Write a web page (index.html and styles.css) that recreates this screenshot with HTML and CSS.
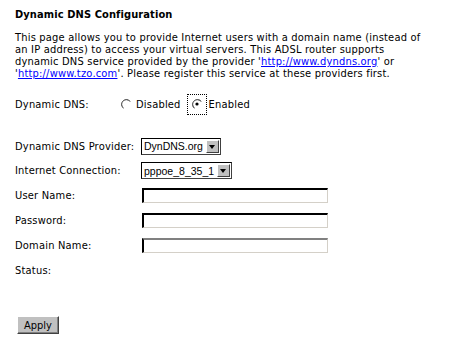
FILE: index.html
```html
<!DOCTYPE html>
<html>
<head>
    <title>Dynamic DNS Configuration</title>
    <link rel="stylesheet" href="styles.css">
</head>
<body>
    <div class="page">
        <h1 class="title">Dynamic DNS Configuration</h1>
        <p class="intro">This page allows you to provide Internet users with a domain name (instead of<br>
        an IP address) to access your virtual servers. This ADSL router supports<br>
        dynamic DNS service provided by the provider '<a href="#">http://www.dyndns.org</a>' or<br>
        '<a href="#">http://www.tzo.com</a>'. Please register this service at these providers first.</p>

        <div class="radio-row">
            <span class="label">Dynamic DNS:</span>
            <span class="radio">
                <svg width="12" height="12" viewBox="0 0 12 12">
                    <path d="M10.5 3.5 A5 5 0 1 0 3.5 10.5" fill="none" stroke="#808080"/>
                    <path d="M1.5 8.5 A5 5 0 0 0 8.5 1.5" fill="none" stroke="#fff"/>
                    <path d="M9.8 3.2 A4 4 0 1 0 3.2 9.8" fill="none" stroke="#404040"/>
                    <circle cx="6" cy="6" r="3.6" fill="#fff"/>
                </svg>
            </span>
            <span class="radio-text">Disabled</span>
            <span class="radio focus">
                <svg width="12" height="12" viewBox="0 0 12 12">
                    <path d="M10.5 3.5 A5 5 0 1 0 3.5 10.5" fill="none" stroke="#808080"/>
                    <path d="M9.8 3.2 A4 4 0 1 0 3.2 9.8" fill="none" stroke="#404040"/>
                    <circle cx="6" cy="6" r="3.6" fill="#fff"/>
                    <circle cx="6" cy="6" r="1.6" fill="#000"/>
                </svg>
            </span>
            <span class="radio-text">Enabled</span>
        </div>

        <div class="form">
            <div class="row first">
                <span class="label">Dynamic DNS Provider:</span>
                <div class="select w-provider"><span class="value">DynDNS.org</span><span class="arrow"></span></div>
            </div>
            <div class="row">
                <span class="label">Internet Connection:</span>
                <div class="select w-conn"><span class="value">pppoe_8_35_1</span><span class="arrow"></span></div>
            </div>
            <div class="row">
                <span class="label">User Name:</span>
                <input class="field" type="text">
            </div>
            <div class="row">
                <span class="label">Password:</span>
                <input class="field" type="password">
            </div>
            <div class="row">
                <span class="label">Domain Name:</span>
                <input class="field muted" type="text">
            </div>
            <div class="row">
                <span class="label">Status:</span>
            </div>
        </div>

        <button class="apply">Apply</button>
    </div>
</body>
</html>
```

FILE: styles.css
```css
body {
    margin: 0;
    font-family: "DejaVu Sans Condensed", "DejaVu Sans", sans-serif;
    font-size: 11px;
    letter-spacing: 0.2px;
    color: #000;
    background: #fff;
}
.page {
    padding: 8px 15px;
    width: 430px;
}
.title {
    font-size: 11px;
    font-weight: bold;
    line-height: 14px;
    letter-spacing: 0.1px;
    margin: 0;
}
.intro {
    margin: 10px 0 0 0;
    line-height: 12px;
    white-space: nowrap;
}
.intro a {
    color: #0000ff;
}
.radio-row {
    display: flex;
    align-items: center;
    height: 20px;
    margin-top: 14px;
}
.radio-row .label {
    width: 104px;
}
.radio {
    display: inline-flex;
    align-items: center;
    justify-content: center;
    width: 14px;
    height: 18px;
}
.radio.focus {
    outline: 1px dotted #000;
    margin-left: 7px;
    width: 18px;
    height: 19px;
}
.radio-text {
    margin-left: 3px;
}
.form {
    margin-top: 20px;
}
.row {
    display: flex;
    align-items: center;
    height: 25px;
}
.row.first {
    height: 24px;
}
.row .label {
    width: 126px;
    flex: none;
}
.select {
    display: flex;
    align-items: center;
    height: 17px;
    box-sizing: border-box;
    border: 1px solid #404040;
    border-top-color: #000;
    border-left-color: #000;
    background: #fff;
}
.select .value {
    flex: 1;
    padding-left: 2px;
    font-family: "Liberation Sans", Arial, sans-serif;
    font-size: 10.5px;
    letter-spacing: 0;
    white-space: nowrap;
}
.select .arrow {
    position: relative;
    flex: none;
    width: 13px;
    height: 13px;
    box-sizing: border-box;
    margin-right: 1px;
    background: #c0c0c0;
    border: 1px solid;
    border-color: #fff #404040 #404040 #fff;
}
.select .arrow::after {
    content: "";
    position: absolute;
    left: 2px;
    top: 4px;
    border-left: 3.5px solid transparent;
    border-right: 3.5px solid transparent;
    border-top: 4px solid #000;
}
.w-provider {
    width: 80px;
}
.w-conn {
    width: 91px;
}
.field {
    width: 186px;
    height: 15px;
    margin: 0 0 0 1px;
    padding: 0;
    box-sizing: border-box;
    border-style: solid;
    border-width: 2px 1px 1px 2px;
    border-color: #000 #d4d0c8 #d4d0c8 #000;
    background: #fff;
}
.field.muted {
    border-top-color: #808080;
}
.apply {
    margin: 33px 0 0 2px;
    width: 42px;
    height: 18px;
    padding: 0;
    font-family: "DejaVu Sans Condensed", "DejaVu Sans", sans-serif;
    font-size: 11px;
    background: #c0c0c0;
    border: 1px solid;
    border-color: #fff #404040 #404040 #fff;
    box-shadow: inset -1px -1px #808080;
}
```
